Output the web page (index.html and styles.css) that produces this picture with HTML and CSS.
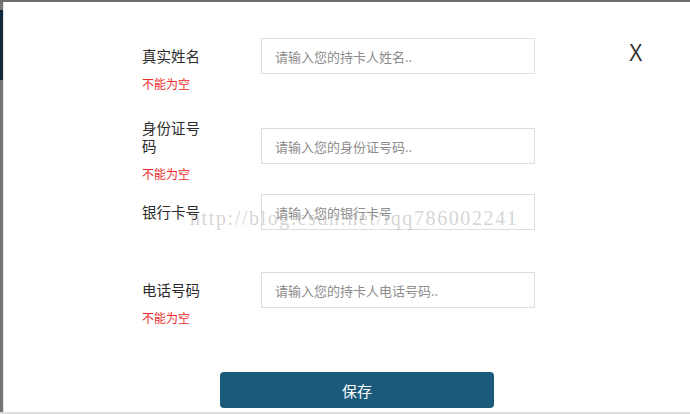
FILE: index.html
```html
<!DOCTYPE html>
<html lang="zh-CN">
<head>
<meta charset="utf-8">
<title>持卡人信息</title>
<link rel="stylesheet" href="styles.css">
</head>
<body>
<div class="frame">
  <div class="edge">
    <div class="edge-top"></div>
    <div class="edge-navy"></div>
    <div class="edge-rest"></div>
  </div>
  <div class="modal">
    <button class="close" type="button">X</button>
    <form class="form">
      <div class="group group--first">
        <div class="row">
          <label class="label">真实姓名</label>
          <input class="field" type="text" placeholder="请输入您的持卡人姓名..">
        </div>
        <div class="error">不能为空</div>
      </div>
      <div class="group group--second">
        <div class="row">
          <label class="label">身份证号码</label>
          <input class="field" type="text" placeholder="请输入您的身份证号码..">
        </div>
        <div class="error">不能为空</div>
      </div>
      <div class="group group--third">
        <div class="row">
          <label class="label">银行卡号</label>
          <input class="field" type="text" placeholder="请输入您的银行卡号">
        </div>
      </div>
      <div class="group group--fourth">
        <div class="row">
          <label class="label">电话号码</label>
          <input class="field" type="text" placeholder="请输入您的持卡人电话号码..">
        </div>
        <div class="error">不能为空</div>
      </div>
      <div class="actions">
        <button class="save" type="button">保存</button>
      </div>
    </form>
    <div class="watermark">http://blog.csdn.net/lqq786002241</div>
  </div>
</div>
</body>
</html>
```

FILE: styles.css
```css
* { box-sizing: border-box; }

html, body {
  margin: 0;
  padding: 0;
  width: 690px;
  height: 414px;
  overflow: hidden;
  background: #ffffff;
  font-family: "Noto Sans CJK SC", "Microsoft YaHei", sans-serif;
}

.frame {
  display: flex;
  width: 690px;
  height: 414px;
  border-top: 2px solid #6e6e6e;
  border-bottom: 2px solid #d9dddd;
}

.edge {
  width: 4px;
  display: flex;
  flex-direction: column;
  border-right: 1px solid #e6e6e6;
}
.edge-top { height: 8px; background: #767676; }
.edge-navy { height: 70px; background: #13283a; }
.edge-rest { flex: 1; background: #747474; }

.modal {
  position: relative;
  flex: 1;
  padding-left: 138px;
}

.close {
  position: absolute;
  top: 36px;
  left: 624px;
  border: 0;
  background: none;
  padding: 0;
  font-family: "Liberation Sans", Arial, sans-serif;
  font-size: 23px;
  line-height: 30px;
  color: #333333;
  transform: scaleX(0.88);
}

.form {
  display: flex;
  flex-direction: column;
}

.group--first { margin-top: 36px; }
.group--second { margin-top: 27px; }
.group--third { margin-top: 12px; }
.group--fourth { margin-top: 42px; }

.row {
  display: flex;
  align-items: flex-end;
}

.label {
  width: 64px;
  margin-right: 55px;
  margin-bottom: 9px;
  font-size: 14.5px;
  line-height: 18px;
  color: #2b2b2b;
}

.field {
  width: 274px;
  height: 36px;
  border: 1px solid #dedede;
  padding: 0 0 0 13px;
  font-family: "Noto Sans CJK SC", "Microsoft YaHei", sans-serif;
  font-size: 13px;
  color: #555;
  background: #fff;
  outline: none;
}
.field::placeholder { color: #8c8c8c; }

.error {
  margin-top: 2px;
  font-size: 12px;
  line-height: 16px;
  color: #ee2a2a;
}

.actions {
  margin-top: 46px;
  padding-left: 78px;
}

.save {
  width: 274px;
  height: 36px;
  border: 0;
  border-radius: 4px;
  background: #1c5a7b;
  color: #ffffff;
  font-family: "Noto Sans CJK SC", "Microsoft YaHei", sans-serif;
  font-size: 15px;
}

.watermark {
  position: absolute;
  top: 203px;
  left: 186px;
  font-family: "Liberation Serif", "Times New Roman", serif;
  font-size: 20px;
  line-height: 26px;
  letter-spacing: 1.6px;
  color: rgba(160, 160, 160, 0.45);
  pointer-events: none;
  white-space: nowrap;
}
```
